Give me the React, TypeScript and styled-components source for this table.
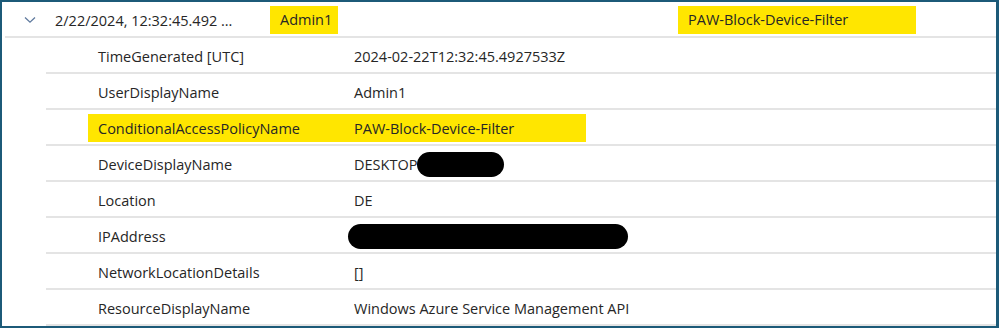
import React from 'react';
import styled, { createGlobalStyle } from 'styled-components';

const GlobalStyle = createGlobalStyle`
  html, body {
    margin: 0;
    padding: 0;
    background: #ffffff;
  }
  body {
    font-family: "Open Sans", "Noto Sans", Arial, sans-serif;
    color: #262626;
  }
`

const Frame = styled.div`
  box-sizing: border-box;
  width: 999px;
  height: 328px;
  overflow: hidden;
  border: 2px solid #1c5a78;
  border-right-width: 3px;
  background: #ffffff;
`

const HeaderRow = styled.div`
  display: grid;
  grid-template-columns: 50px 215px 408px 1fr;
  align-items: center;
  height: 32px;
  padding-top: 2px;
  margin-left: 3px;
  border-bottom: 2px solid #e4e4e4;
  font-size: 14.5px;
`

const ChevronCell = styled.div`
  display: flex;
  align-items: center;
  padding-left: 19px;
  color: #5f7a9e;
`

const HeaderText = styled.div`
  white-space: nowrap;
`

type MarkProps = {
  $pad: number;
}

const Mark = styled.span<MarkProps>`
  display: inline-block;
  background: #ffe600;
  line-height: 28px;
  padding: 0 ${props => props.$pad}px 0 10px;
`

const DetailRow = styled.div`
  display: flex;
  align-items: center;
  height: 32px;
  padding-top: 2px;
  margin-left: 44px;
  padding-left: 42px;
  border-bottom: 2px solid #e4e4e4;
  font-size: 14.5px;
`

type CellsProps = {
  $highlight?: boolean;
}

const Cells = styled.div<CellsProps>`
  display: flex;
  align-items: center;
  width: 498px;
  height: 28px;
  background: ${props => props.$highlight ? '#ffe600' : 'transparent'};
`

const Key = styled.div`
  flex: 0 0 256px;
  padding-left: 10px;
  white-space: nowrap;
`

const Value = styled.div`
  display: flex;
  align-items: center;
  white-space: nowrap;
`

type RedactProps = {
  $width: number;
}

const Redacted = styled.span<RedactProps>`
  display: inline-block;
  width: ${props => props.$width}px;
  height: 25px;
  border-radius: 13px;
  background: #000000;
`

const Chevron = () => (
  <svg width="12" height="8" viewBox="0 0 12 8">
    <path d="M1 1.5 L6 6.2 L11 1.5" fill="none" stroke="currentColor" strokeWidth="1.3" />
  </svg>
)

type Field = {
  name: string;
  value: React.ReactNode;
  highlight?: boolean;
}

const fields: Field[] = [
  { name: 'TimeGenerated [UTC]', value: '2024-02-22T12:32:45.4927533Z' },
  { name: 'UserDisplayName', value: 'Admin1' },
  { name: 'ConditionalAccessPolicyName', value: 'PAW-Block-Device-Filter', highlight: true },
  { name: 'DeviceDisplayName', value: <>DESKTOP<Redacted $width={87} /></> },
  { name: 'Location', value: 'DE' },
  { name: 'IPAddress', value: <Redacted $width={280} style={{ marginLeft: -6 }} /> },
  { name: 'NetworkLocationDetails', value: '[]' },
  { name: 'ResourceDisplayName', value: 'Windows Azure Service Management API' },
];

const App = () => (
  <>
    <GlobalStyle />
    <Frame>
      <HeaderRow>
        <ChevronCell><Chevron /></ChevronCell>
        <HeaderText>2/22/2024, 12:32:45.492 ...</HeaderText>
        <div><Mark $pad={6}>Admin1</Mark></div>
        <div><Mark $pad={68}>PAW-Block-Device-Filter</Mark></div>
      </HeaderRow>
      {fields.map(field => (
        <DetailRow key={field.name}>
          <Cells $highlight={field.highlight}>
            <Key>{field.name}</Key>
            <Value>{field.value}</Value>
          </Cells>
        </DetailRow>
      ))}
    </Frame>
  </>
);

export default App;
